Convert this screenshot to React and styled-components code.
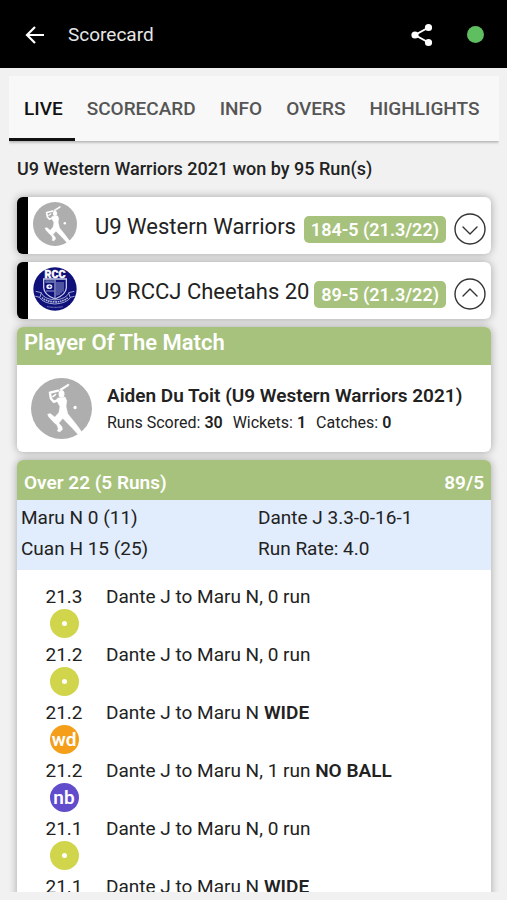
import React from "react";
import styled, { createGlobalStyle } from "styled-components";

const GlobalStyle = createGlobalStyle`
  * { box-sizing: border-box; }
  body {
    margin: 0;
    background: #f1f1f1;
    color: #222;
    font-family: Roboto, "Liberation Sans", sans-serif;
    font-size: 19px;
  }
  button { font: inherit; color: inherit; border: 0; background: none; padding: 0; cursor: pointer; }
  p, h1, h2 { margin: 0; }
`;

const Screen = styled.div`
  height: 100vh;
  display: flex;
  flex-direction: column;
  overflow: hidden;
  padding-bottom: 8px;
`;

const AppBar = styled.header`
  flex: none;
  display: flex;
  align-items: center;
  height: 68px;
  padding: 1px 23px 0 24px;
  background: #000;
  color: #fff;
`;

const IconButton = styled.button`
  display: flex;
  align-items: center;
  justify-content: center;
  width: ${(p) => p.$size}px;
  height: ${(p) => p.$size}px;
`;

const Title = styled.h1`
  flex: 1;
  padding-left: 22px;
  font-size: 19px;
  line-height: 24px;
  font-weight: 400;
  color: #e6e6e6;
`;

const StatusDot = styled.span`
  width: 17px;
  height: 17px;
  margin-left: 33px;
  border-radius: 50%;
  background: #5fbe60;
`;

const Tabs = styled.nav`
  flex: none;
  display: flex;
  height: 65px;
  margin: 8px 8px 0 9px;
  background: #f8f8f8;
  box-shadow: 0 1px 3px rgba(0, 0, 0, 0.35);
  clip-path: inset(0 0 -6px 0);
`;

const Tab = styled.button`
  padding: 3px 12px 0 ${(p) => (p.$active ? 15 : 12)}px;
  font-size: 19px;
  font-weight: 500;
  color: ${(p) => (p.$active ? "#111" : "#555")};
  border-bottom: 3px solid ${(p) => (p.$active ? "#111" : "transparent")};
`;

const Content = styled.main`
  flex: 1;
  min-height: 0;
  overflow: hidden;
  display: flex;
  flex-direction: column;
  gap: 8px;
  margin-top: 4px;
  padding: 12px 16px 0 17px;
`;

const Result = styled.p`
  flex: none;
  height: 32px;
  font-size: 18px;
  line-height: 24px;
  font-weight: 500;
`;

const Card = styled.section`
  flex: none;
  overflow: hidden;
  border-radius: 6px;
  background: #fff;
  box-shadow: 0 0 8px rgba(0, 0, 0, 0.32);
`;

const TeamCard = styled(Card)`
  display: flex;
  align-items: center;
  height: 57px;
  padding: 0 5px;
  border-left: 11px solid #000;
`;

const TeamBadge = styled.div`
  flex: none;
  width: 44px;
  height: 44px;
  margin-bottom: 3px;
  svg { display: block; width: 100%; height: 100%; }
`;

const TeamName = styled.h2`
  flex: 1;
  min-width: 0;
  overflow: hidden;
  margin: 2px 5px 0 18px;
  white-space: nowrap;
  font-size: 22px;
  line-height: 28px;
  font-weight: 400;
`;

const Score = styled.span`
  flex: none;
  margin: 8px 8px 0 0;
  padding: 0 7px;
  border-radius: 5px;
  background: #a7c27c;
  color: #fff;
  font-size: 18px;
  line-height: 27px;
  font-weight: 600;
`;

const Toggle = styled(IconButton)`
  flex: none;
  margin-top: 6px;
`;

const PlayerHeader = styled.h2`
  height: 38px;
  padding: 3px 7px;
  background: #a7c27c;
  color: #fff;
  font-size: 22px;
  line-height: 26px;
  font-weight: 600;
`;

const Player = styled.div`
  display: flex;
  align-items: center;
  height: 87px;
  padding: 0 14px;
  gap: 15px;
`;

const Avatar = styled.div`
  flex: none;
  width: 61px;
  height: 61px;
  svg { display: block; width: 100%; height: 100%; }
`;

const PlayerText = styled.div`
  display: flex;
  flex-direction: column;
  gap: 2px;
  white-space: nowrap;
`;

const PlayerName = styled.p`
  font-size: 19px;
  line-height: 26px;
  font-weight: 600;
`;

const Stats = styled.p`
  display: flex;
  gap: 10px;
  font-size: 16px;
  line-height: 24px;
`;

const OverHeader = styled.h2`
  display: flex;
  align-items: center;
  justify-content: space-between;
  height: 40px;
  padding: 4px 7px 0;
  background: #a7c27c;
  color: #fff;
  font-size: 19px;
  font-weight: 600;
`;

const Summary = styled.div`
  display: grid;
  grid-template-columns: 1fr 1fr;
  padding: 2px 0 6px;
  background: #e1ecfd;
  line-height: 31px;
  span { padding-left: 4px; }
`;

const Balls = styled.ul`
  list-style: none;
  margin: 0;
  padding: 15px 17px;
`;

const Ball = styled.li`
  display: grid;
  grid-template-columns: 60px 1fr;
  column-gap: 12px;
  height: 58px;
`;

const BallMark = styled.div`
  display: flex;
  flex-direction: column;
  align-items: center;
  line-height: 24px;
`;

const kinds = { dot: "#d0d54c", wd: "#f49e1a", nb: "#614ccb" };

const Chip = styled.span`
  display: flex;
  align-items: center;
  justify-content: center;
  width: 29px;
  height: 29px;
  border-radius: 50%;
  background: ${(p) => kinds[p.$kind]};
  color: #fff;
  font-size: 19px;
  font-weight: 600;
`;

const Pip = styled.i`
  width: 5px;
  height: 5px;
  border-radius: 50%;
  background: #fff;
`;

const BallText = styled.p`
  line-height: 24px;
`;

const Strong = styled.strong`
  font-weight: 600;
`;

const Batter = () => (
  <svg viewBox="0 0 184 184" role="img" aria-label="Batter">
    <circle cx="92" cy="92" r="92" fill="#aeaeae" />
    <g fill="#fff" stroke="#fff" strokeLinejoin="round" strokeLinecap="round">
      <path d="M87 34L113 18L115 22L91 38Z" strokeWidth="2" />
      <path d="M82 38L70 41L57 44L60 62L69 72L82 66" fill="none" strokeWidth="7" />
      <path d="M66 56L74 50" strokeWidth="5" />
      <ellipse cx="92" cy="48" rx="9" ry="11" strokeWidth="0" />
      <path d="M80 60L103 57L108 68L106 86L111 108L137 140L153 162L144 173L124 151L96 122L84 136L94 148L95 155L87 163L79 160L82 153L78 142L69 134L53 117L50 109L58 107L72 118L84 104L87 86L79 72Z" strokeWidth="1" />
    </g>
    <circle cx="133" cy="89" r="5" fill="#fff" />
  </svg>
);

const Crest = () => (
  <svg viewBox="0 0 132 132" role="img" aria-label="RCC">
    <circle cx="66" cy="66" r="65" fill="#10107a" />
    <path d="M32 36H100V62Q99 83 66 96Q33 83 32 62Z" fill="#10107a" stroke="#c5cbe7" strokeWidth="4" />
    <path d="M66 39V94" stroke="#c5cbe7" strokeWidth="3" />
    <path d="M37 40H63V48H37Z" fill="#5b67a6" />
    <ellipse cx="49" cy="59" rx="9" ry="7" fill="#edf0fb" />
    <path d="M45 59H55M50 55V63" stroke="#10107a" strokeWidth="2" />
    <path d="M72 45V86M78 45V84M84 45V79M90 45V74M38 72H64" stroke="#8d98c9" strokeWidth="3" />
    <text x="66" y="33" textAnchor="middle" fill="#fff" stroke="#fff" strokeWidth="1" fontFamily="Roboto, sans-serif" fontSize="32" fontWeight="900">RCC</text>
    <path d="M8 73L25 77L21 91L7 88M124 73L107 77L111 91L125 88M24 77Q32 96 66 99Q100 96 108 77M19 91Q31 109 66 111Q101 109 113 91" fill="none" stroke="#9da6d3" strokeWidth="3" />
    <path d="M27 92Q39 103 66 105Q93 103 105 92" fill="none" stroke="#aeb6dc" strokeWidth="5" strokeDasharray="5 2" />
    <path d="M42 119Q66 123 90 119" fill="none" stroke="#8f99ca" strokeWidth="3" strokeDasharray="3 1" />
  </svg>
);

const Chevron = ({ up }) => (
  <svg width="32" height="32" viewBox="0 0 32 32" fill="none" stroke="#333" strokeWidth="1.4" strokeLinecap="round" strokeLinejoin="round" aria-hidden="true">
    <circle cx="16" cy="16" r="15" />
    <path d={up ? "M9 18L16 11L23 18" : "M9 14L16 21L23 14"} />
  </svg>
);

const Back = () => (
  <svg width="22" height="22" viewBox="0 0 22 22" fill="none" stroke="#fff" strokeWidth="2.2" aria-hidden="true">
    <path d="M20 11H3M11 3L3 11L11 19" />
  </svg>
);

const Share = () => (
  <svg width="24" height="24" viewBox="0 0 24 24" fill="#fff" stroke="#fff" strokeWidth="2" aria-hidden="true">
    <path d="M18.5 4.5L5 12L18.5 19.5" fill="none" />
    <circle cx="18.5" cy="4.5" r="2.6" />
    <circle cx="5" cy="12" r="2.6" />
    <circle cx="18.5" cy="19.5" r="2.6" />
  </svg>
);

const tabs = ["LIVE", "SCORECARD", "INFO", "OVERS", "HIGHLIGHTS"];

const teams = [
  { name: "U9 Western Warriors 2021", score: "184-5 (21.3/22)", Logo: Batter, open: false },
  { name: "U9 RCCJ Cheetahs 2021", score: "89-5 (21.3/22)", Logo: Crest, open: true },
];

const balls = [
  { over: "21.3", kind: "dot", text: "Dante J to Maru N, 0 run" },
  { over: "21.2", kind: "dot", text: "Dante J to Maru N, 0 run" },
  { over: "21.2", kind: "wd", text: "Dante J to Maru N", extra: "WIDE" },
  { over: "21.2", kind: "nb", text: "Dante J to Maru N, 1 run", extra: "NO BALL" },
  { over: "21.1", kind: "dot", text: "Dante J to Maru N, 0 run" },
  { over: "21.1", kind: "wd", text: "Dante J to Maru N", extra: "WIDE" },
];

export default function App() {
  return (
    <Screen>
      <GlobalStyle />
      <AppBar>
        <IconButton $size={22} aria-label="Back"><Back /></IconButton>
        <Title>Scorecard</Title>
        <IconButton $size={24} aria-label="Share"><Share /></IconButton>
        <StatusDot />
      </AppBar>
      <Tabs>
        {tabs.map((t, i) => (
          <Tab key={t} $active={i === 0} aria-current={i === 0 ? "page" : undefined}>{t}</Tab>
        ))}
      </Tabs>
      <Content>
        <Result>U9 Western Warriors 2021 won by 95 Run(s)</Result>
        {teams.map(({ name, score, Logo, open }) => (
          <TeamCard key={name}>
            <TeamBadge><Logo /></TeamBadge>
            <TeamName>{name}</TeamName>
            <Score>{score}</Score>
            <Toggle $size={32} aria-expanded={open} aria-label={`Show ${name} innings`}><Chevron up={open} /></Toggle>
          </TeamCard>
        ))}
        <Card>
          <PlayerHeader>Player Of The Match</PlayerHeader>
          <Player>
            <Avatar><Batter /></Avatar>
            <PlayerText>
              <PlayerName>Aiden Du Toit (U9 Western Warriors 2021)</PlayerName>
              <Stats>
                <span>Runs Scored: <Strong>30</Strong></span>
                <span>Wickets: <Strong>1</Strong></span>
                <span>Catches: <Strong>0</Strong></span>
              </Stats>
            </PlayerText>
          </Player>
        </Card>
        <Card>
          <OverHeader><span>Over 22 (5 Runs)</span><span>89/5</span></OverHeader>
          <Summary>
            <span>Maru N 0 (11)</span>
            <span>Dante J 3.3-0-16-1</span>
            <span>Cuan H 15 (25)</span>
            <span>Run Rate: 4.0</span>
          </Summary>
          <Balls>
            {balls.map((b, i) => (
              <Ball key={i}>
                <BallMark>
                  {b.over}
                  <Chip $kind={b.kind}>{b.kind === "dot" ? <Pip /> : b.kind}</Chip>
                </BallMark>
                <BallText>{b.text}{b.extra && <> <Strong>{b.extra}</Strong></>}</BallText>
              </Ball>
            ))}
          </Balls>
        </Card>
      </Content>
    </Screen>
  );
}
